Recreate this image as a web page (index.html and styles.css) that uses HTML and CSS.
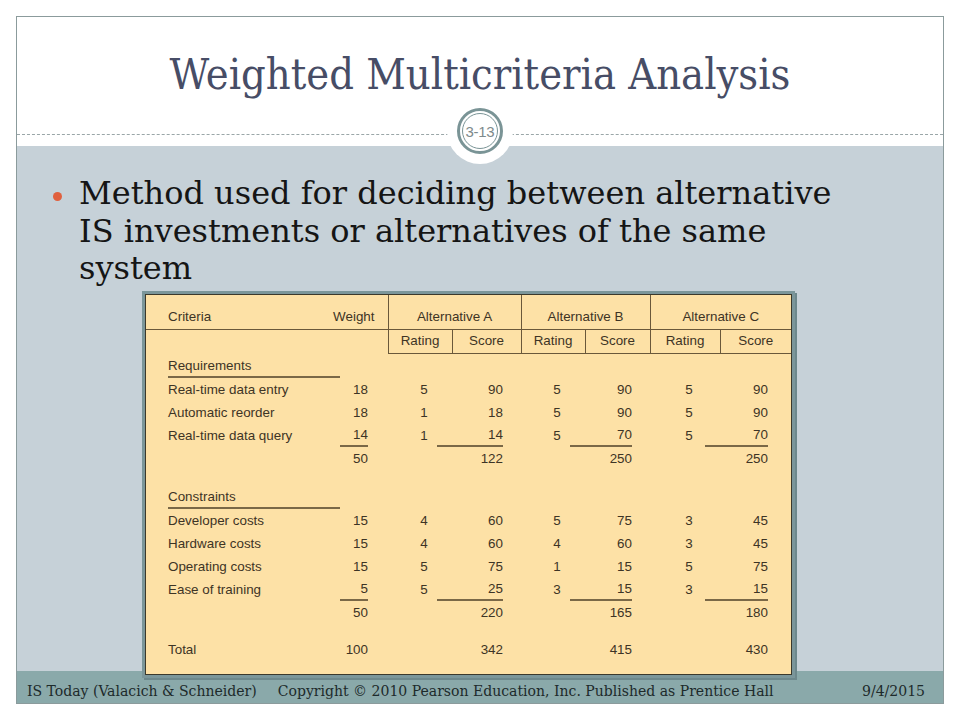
FILE: index.html
```html
<!DOCTYPE html>
<html lang="en">
<head>
<meta charset="utf-8">
<title>Weighted Multicriteria Analysis</title>
<link rel="stylesheet" href="styles.css">
</head>
<body>
<div class="slide">
  <header class="head">
    <h1 class="title">Weighted Multicriteria Analysis</h1>
    <div class="rule"></div>
  </header>
  <div class="badge"><div class="ring"><div class="ring-in">3-13</div></div></div>
  <main class="content">
    <ul class="bullets">
      <li><span class="dot"></span><span class="txt">Method used for deciding between alternative IS investments or alternatives of the same system</span></li>
    </ul>
    <div class="figure">
      <table class="wma">
        <colgroup>
          <col class="c-crit"><col class="c-wt"><col class="c-ra"><col class="c-sa"><col class="c-rb"><col class="c-sb"><col class="c-rc"><col class="c-sc">
        </colgroup>
        <tr class="h1row">
          <th class="crit">Criteria</th>
          <th class="wt">Weight</th>
          <th class="alt" colspan="2">Alternative A</th>
          <th class="alt" colspan="2">Alternative B</th>
          <th class="alt" colspan="2">Alternative C</th>
        </tr>
        <tr class="h2row">
          <td class="blank"></td><td class="blank"></td>
          <th class="sub">Rating</th><th class="sub">Score</th>
          <th class="sub">Rating</th><th class="sub">Score</th>
          <th class="sub">Rating</th><th class="sub">Score</th>
        </tr>
        <tr class="gap3"><td colspan="8"></td></tr>
        <tr><td class="crit"><div class="grp">Requirements</div></td><td></td><td></td><td></td><td></td><td></td><td></td><td></td></tr>
        <tr><td class="crit">Real-time data entry</td><td class="wt">18</td><td class="rt">5</td><td class="sc">90</td><td class="rt">5</td><td class="sc">90</td><td class="rt">5</td><td class="sc sc-c">90</td></tr>
        <tr><td class="crit">Automatic reorder</td><td class="wt">18</td><td class="rt">1</td><td class="sc">18</td><td class="rt">5</td><td class="sc">90</td><td class="rt">5</td><td class="sc sc-c">90</td></tr>
        <tr><td class="crit">Real-time data query</td><td class="wt"><div class="uw">14</div></td><td class="rt">1</td><td class="sc"><div class="us">14</div></td><td class="rt">5</td><td class="sc"><div class="us">70</div></td><td class="rt">5</td><td class="sc sc-c"><div class="us">70</div></td></tr>
        <tr><td class="crit"></td><td class="wt">50</td><td></td><td class="sc">122</td><td></td><td class="sc">250</td><td></td><td class="sc sc-c">250</td></tr>
        <tr class="gap15"><td colspan="8"></td></tr>
        <tr><td class="crit"><div class="grp">Constraints</div></td><td></td><td></td><td></td><td></td><td></td><td></td><td></td></tr>
        <tr><td class="crit">Developer costs</td><td class="wt">15</td><td class="rt">4</td><td class="sc">60</td><td class="rt">5</td><td class="sc">75</td><td class="rt">3</td><td class="sc sc-c">45</td></tr>
        <tr><td class="crit">Hardware costs</td><td class="wt">15</td><td class="rt">4</td><td class="sc">60</td><td class="rt">4</td><td class="sc">60</td><td class="rt">3</td><td class="sc sc-c">45</td></tr>
        <tr><td class="crit">Operating costs</td><td class="wt">15</td><td class="rt">5</td><td class="sc">75</td><td class="rt">1</td><td class="sc">15</td><td class="rt">5</td><td class="sc sc-c">75</td></tr>
        <tr><td class="crit">Ease of training</td><td class="wt"><div class="uw">5</div></td><td class="rt">5</td><td class="sc"><div class="us">25</div></td><td class="rt">3</td><td class="sc"><div class="us">15</div></td><td class="rt">3</td><td class="sc sc-c"><div class="us">15</div></td></tr>
        <tr><td class="crit"></td><td class="wt">50</td><td></td><td class="sc">220</td><td></td><td class="sc">165</td><td></td><td class="sc sc-c">180</td></tr>
        <tr class="gap14"><td colspan="8"></td></tr>
        <tr><td class="crit">Total</td><td class="wt">100</td><td></td><td class="sc">342</td><td></td><td class="sc">415</td><td></td><td class="sc sc-c">430</td></tr>
        <tr class="gapend"><td colspan="8"></td></tr>
      </table>
    </div>
  </main>
  <footer class="foot">
    <span class="f-left">IS Today (Valacich &amp; Schneider)</span>
    <span class="f-mid">Copyright © 2010 Pearson Education, Inc. Published as Prentice Hall</span>
    <span class="f-date">9/4/2015</span>
  </footer>
</div>
</body>
</html>
```

FILE: styles.css
```css
html, body {
  margin: 0;
  padding: 0;
  background: #ffffff;
}

.slide {
  position: relative;
  box-sizing: content-box;
  width: 926px;
  height: 686px;
  margin: 16px 0 0 16px;
  border: 1px solid #8b9b9c;
  display: flex;
  flex-direction: column;
  background: #ffffff;
}

.head {
  height: 129px;
  flex: none;
  background: #ffffff;
}

.title {
  margin: 0;
  padding-top: 32px;
  font-family: "DejaVu Serif Condensed", "DejaVu Serif", serif;
  font-stretch: condensed;
  font-weight: normal;
  font-size: 43px;
  line-height: 50px;
  color: #474d66;
  text-align: center;
}

.rule {
  margin-top: 35px;
  border-top: 1px dashed #9aa6a8;
}

.badge {
  position: absolute;
  left: calc(50% - 33px);
  top: 81px;
  width: 66px;
  height: 66px;
  border-radius: 50%;
  background: #ffffff;
  display: flex;
  align-items: center;
  justify-content: center;
  z-index: 2;
}

.ring {
  box-sizing: border-box;
  width: 46px;
  height: 46px;
  border-radius: 50%;
  border: 3px solid #7a9496;
  display: flex;
  align-items: center;
  justify-content: center;
}

.ring-in {
  box-sizing: border-box;
  width: 36px;
  height: 36px;
  border-radius: 50%;
  border: 1px solid #7a9496;
  display: flex;
  align-items: center;
  justify-content: center;
  font-family: "Liberation Sans Narrow", "Liberation Sans", sans-serif;
  font-size: 15px;
  color: #7e8a8c;
  letter-spacing: -0.3px;
}

.content {
  height: 525px;
  flex: none;
  background: #c6d1d8;
  box-sizing: border-box;
  padding-top: 29px;
}

.bullets {
  list-style: none;
  margin: 0;
  padding: 0 0 0 36px;
}

.bullets li {
  display: flex;
  align-items: flex-start;
  gap: 17px;
}

.dot {
  flex: none;
  width: 9px;
  height: 9px;
  margin-top: 17px;
  border-radius: 50%;
  background: #e0603e;
}

.txt {
  width: 772px;
  font-family: "DejaVu Serif", serif;
  font-size: 32px;
  line-height: 37.5px;
  color: #151515;
}

.figure {
  position: relative;
  z-index: 1;
  width: 645px;
  margin: 6px 0 0 128px;
  border: 1px solid #3b392c;
  box-shadow: 0 0 0 3px #7b969a, 2px 2px 0 3px #6d888c;
  background: #fde1a6;
}

.wma {
  width: 645px;
  table-layout: fixed;
  border-collapse: collapse;
  font-family: "Liberation Sans", Arial, sans-serif;
  font-size: 13.4px;
  color: #3d3425;
}

.c-crit { width: 185px; }
.c-wt { width: 57px; }
.c-ra { width: 64px; }
.c-sa { width: 69px; }
.c-rb { width: 64px; }
.c-sb { width: 65px; }
.c-rc { width: 70px; }
.c-sc { width: 71px; }

.wma th, .wma td {
  padding: 0;
  height: 23px;
  line-height: 23px;
  font-weight: normal;
  white-space: nowrap;
}

.h1row th {
  height: 30px;
  line-height: 16px;
  vertical-align: bottom;
  padding-bottom: 4px;
  border-bottom: 1px solid #6a583a;
}

.h1row .crit { text-align: left; padding-left: 22px; }
.h1row .wt { text-align: right; padding-right: 13px; }
.h1row .alt {
  text-align: center;
  border-left: 1px solid #6a583a;
}

.h2row .sub {
  height: 23px;
  line-height: 22px;
  text-align: center;
  border-left: 1px solid #6a583a;
  border-bottom: 1px solid #6a583a;
}

.gap3 td { height: 1px; line-height: 1px; }
.gap15 td { height: 16px; line-height: 16px; }
.gap14 td { height: 14px; line-height: 14px; }
.gapend td { height: 13px; line-height: 13px; }

.wma td.crit { text-align: left; padding-left: 22px; }
.wma td.wt { text-align: right; padding-right: 20px; }
.wma td.rt { text-align: center; padding-left: 8px; }
.wma td.sc { text-align: right; padding-right: 18px; }
.wma td.sc-c { padding-right: 23px; }

.grp {
  margin-right: -9px;
  line-height: 21px;
  border-bottom: 2px solid #7a6847;
}

.uw {
  width: 28px;
  margin-left: auto;
  line-height: 21px;
  border-bottom: 2px solid #7a6847;
}

.us {
  margin-left: -15px;
  line-height: 21px;
  border-bottom: 2px solid #7a6847;
}

.foot {
  height: 32px;
  flex: none;
  background: #8aa9aa;
  display: flex;
  align-items: center;
  padding: 7px 18px 0 10px;
  box-sizing: border-box;
  font-family: "DejaVu Serif Condensed", "DejaVu Serif", serif;
  font-stretch: condensed;
  font-size: 15.6px;
  color: #1d2a2b;
  white-space: nowrap;
}

.f-mid {
  margin-left: 21px;
}

.f-date {
  margin-left: auto;
}
```
